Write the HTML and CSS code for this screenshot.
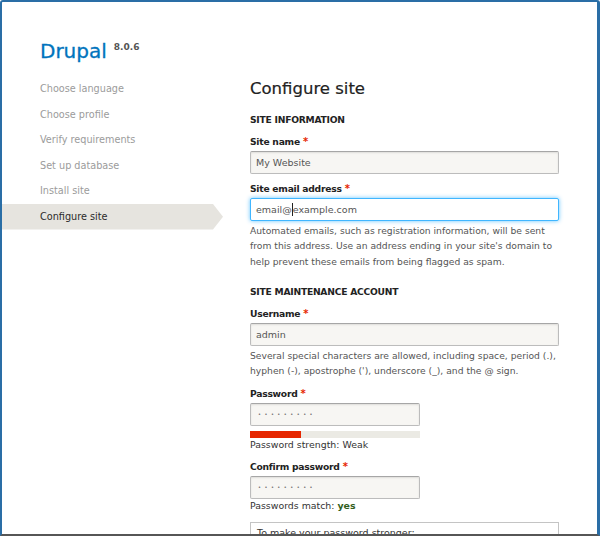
FILE: index.html
```html
<!DOCTYPE html>
<html lang="en">
<head>
<meta charset="utf-8">
<title>Configure site | Drupal</title>
<link rel="stylesheet" href="styles.css">
</head>
<body>
<div class="frame">
  <aside class="sidebar">
    <div class="brand"><span class="brand-name">Drupal</span><span class="version">8.0.6</span></div>
    <ol class="steps">
      <li class="step">Choose language</li>
      <li class="step">Choose profile</li>
      <li class="step">Verify requirements</li>
      <li class="step">Set up database</li>
      <li class="step">Install site</li>
      <li class="step active">Configure site</li>
    </ol>
  </aside>
  <main class="content">
    <h1 class="page-title">Configure site</h1>

    <h2 class="section-title">Site information</h2>
    <div class="form-item">
      <label class="label">Site name<span class="req">*</span></label>
      <div class="field">My Website</div>
    </div>
    <div class="form-item">
      <label class="label">Site email address<span class="req">*</span></label>
      <div class="field focus">email@<span class="caret"></span>example.com</div>
      <div class="desc">Automated emails, such as registration information, will be sent from this address. Use an address ending in your site's domain to help prevent these emails from being flagged as spam.</div>
    </div>

    <h2 class="section-title">Site maintenance account</h2>
    <div class="form-item">
      <label class="label">Username<span class="req">*</span></label>
      <div class="field">admin</div>
      <div class="desc">Several special characters are allowed, including space, period (.), hyphen (-), apostrophe ('), underscore (_), and the @ sign.</div>
    </div>
    <div class="form-item">
      <label class="label">Password<span class="req">*</span></label>
      <div class="field short pw">•••••••••</div>
      <div class="strength"><div class="strength-fill" style="width:30%"></div></div>
      <div class="status strength-text">Password strength: <span class="weak">Weak</span></div>
    </div>
    <div class="form-item">
      <label class="label">Confirm password<span class="req">*</span></label>
      <div class="field short pw">•••••••••</div>
      <div class="status">Passwords match: <span class="ok">yes</span></div>
    </div>
    <div class="suggestions">To make your password stronger:</div>
  </main>
</div>
</body>
</html>
```

FILE: styles.css
```css
* {
  box-sizing: border-box;
}

html,
body {
  margin: 0;
  padding: 0;
}

body {
  width: 600px;
  height: 536px;
  overflow: hidden;
  background: #fff;
  font-family: "DejaVu Sans", "Liberation Sans", sans-serif;
  color: #222;
}

.frame {
  width: 600px;
  height: 536px;
  display: flex;
  overflow: hidden;
  background: #fff;
  border: 2px solid #2a6ea6;
  border-right-width: 3px;
  border-bottom: 2px solid #565656;
  border-radius: 3px 3px 0 0;
}

/* Sidebar */
.sidebar {
  width: 248px;
  flex: none;
  padding-top: 33px;
}

.brand {
  height: 24px;
  line-height: 24px;
  padding-left: 38px;
  white-space: nowrap;
}

.brand-name {
  font-size: 20px;
  color: #0074bd;
  -webkit-text-stroke: 0.3px #0074bd;
}

.version {
  font-size: 9px;
  font-weight: bold;
  color: #555;
  margin-left: 7px;
  vertical-align: 8px;
}

.steps {
  list-style: none;
  margin: 17px 0 0;
  padding: 0;
}

.step {
  height: 25.6px;
  line-height: 25.6px;
  padding-left: 38px;
  font-size: 9.7px;
  color: #9b9b9b;
  white-space: nowrap;
}

.step.active {
  width: 221px;
  color: #2b2b2b;
  background: #e6e4df;
  clip-path: polygon(0 0, 211px 0, 221px 50%, 211px 100%, 0 100%);
}

/* Content */
.content {
  flex: 1;
  padding-top: 79px;
}

.page-title {
  margin: 0;
  font-size: 16.5px;
  line-height: 16px;
  font-weight: normal;
  color: #222;
  -webkit-text-stroke: 0.2px #222;
}

.section-title {
  margin: 16px 0 8px;
  font-size: 9.2px;
  line-height: 14px;
  font-weight: bold;
  letter-spacing: -0.25px;
  text-transform: uppercase;
  color: #222;
}

.form-item {
  width: 309px;
  margin-top: 8px;
}

.label {
  display: block;
  margin-bottom: 2px;
  font-size: 9.2px;
  line-height: 14px;
  font-weight: bold;
  letter-spacing: -0.25px;
  color: #222;
}

.req {
  margin-left: 3px;
  font-size: 10px;
  color: #e62600;
}

.field {
  height: 23px;
  padding: 0 5px;
  border: 1px solid #bcbcbc;
  border-top-color: #a6a6a6;
  border-radius: 2px;
  background: #f7f6f3;
  box-shadow: inset 0 1px 2px rgba(0, 0, 0, 0.1);
  font-size: 9.5px;
  line-height: 21px;
  color: #555;
  white-space: nowrap;
}

.field.focus {
  background: #fff;
  border-color: #40b6ff;
  box-shadow: 0 0 4px rgba(64, 182, 255, 0.8);
}

.field.short {
  width: 170px;
}

.field.pw {
  padding-left: 7px;
  font-size: 5px;
  letter-spacing: 3.5px;
  color: #555;
}

.caret {
  display: inline-block;
  width: 0;
  height: 13px;
  border-left: 1px solid #222;
  vertical-align: -3px;
}

.desc {
  margin-top: 1.5px;
  font-size: 9.2px;
  line-height: 15.5px;
  color: #555;
}

.strength {
  width: 170px;
  height: 7px;
  margin-top: 5px;
  background: #ebeae4;
}

.strength-fill {
  height: 100%;
  background: #e62600;
}

.status {
  font-size: 9.4px;
  line-height: 14px;
  color: #333;
}

.strength-text {
  margin-bottom: 1.5px;
}

.ok {
  font-weight: bold;
  color: #325e1c;
}

.suggestions {
  width: 309px;
  margin-top: 9px;
  padding: 3px 6px;
  border: 1px solid #c4c4c4;
  font-size: 9.5px;
  line-height: 14px;
  color: #333;
}
```
